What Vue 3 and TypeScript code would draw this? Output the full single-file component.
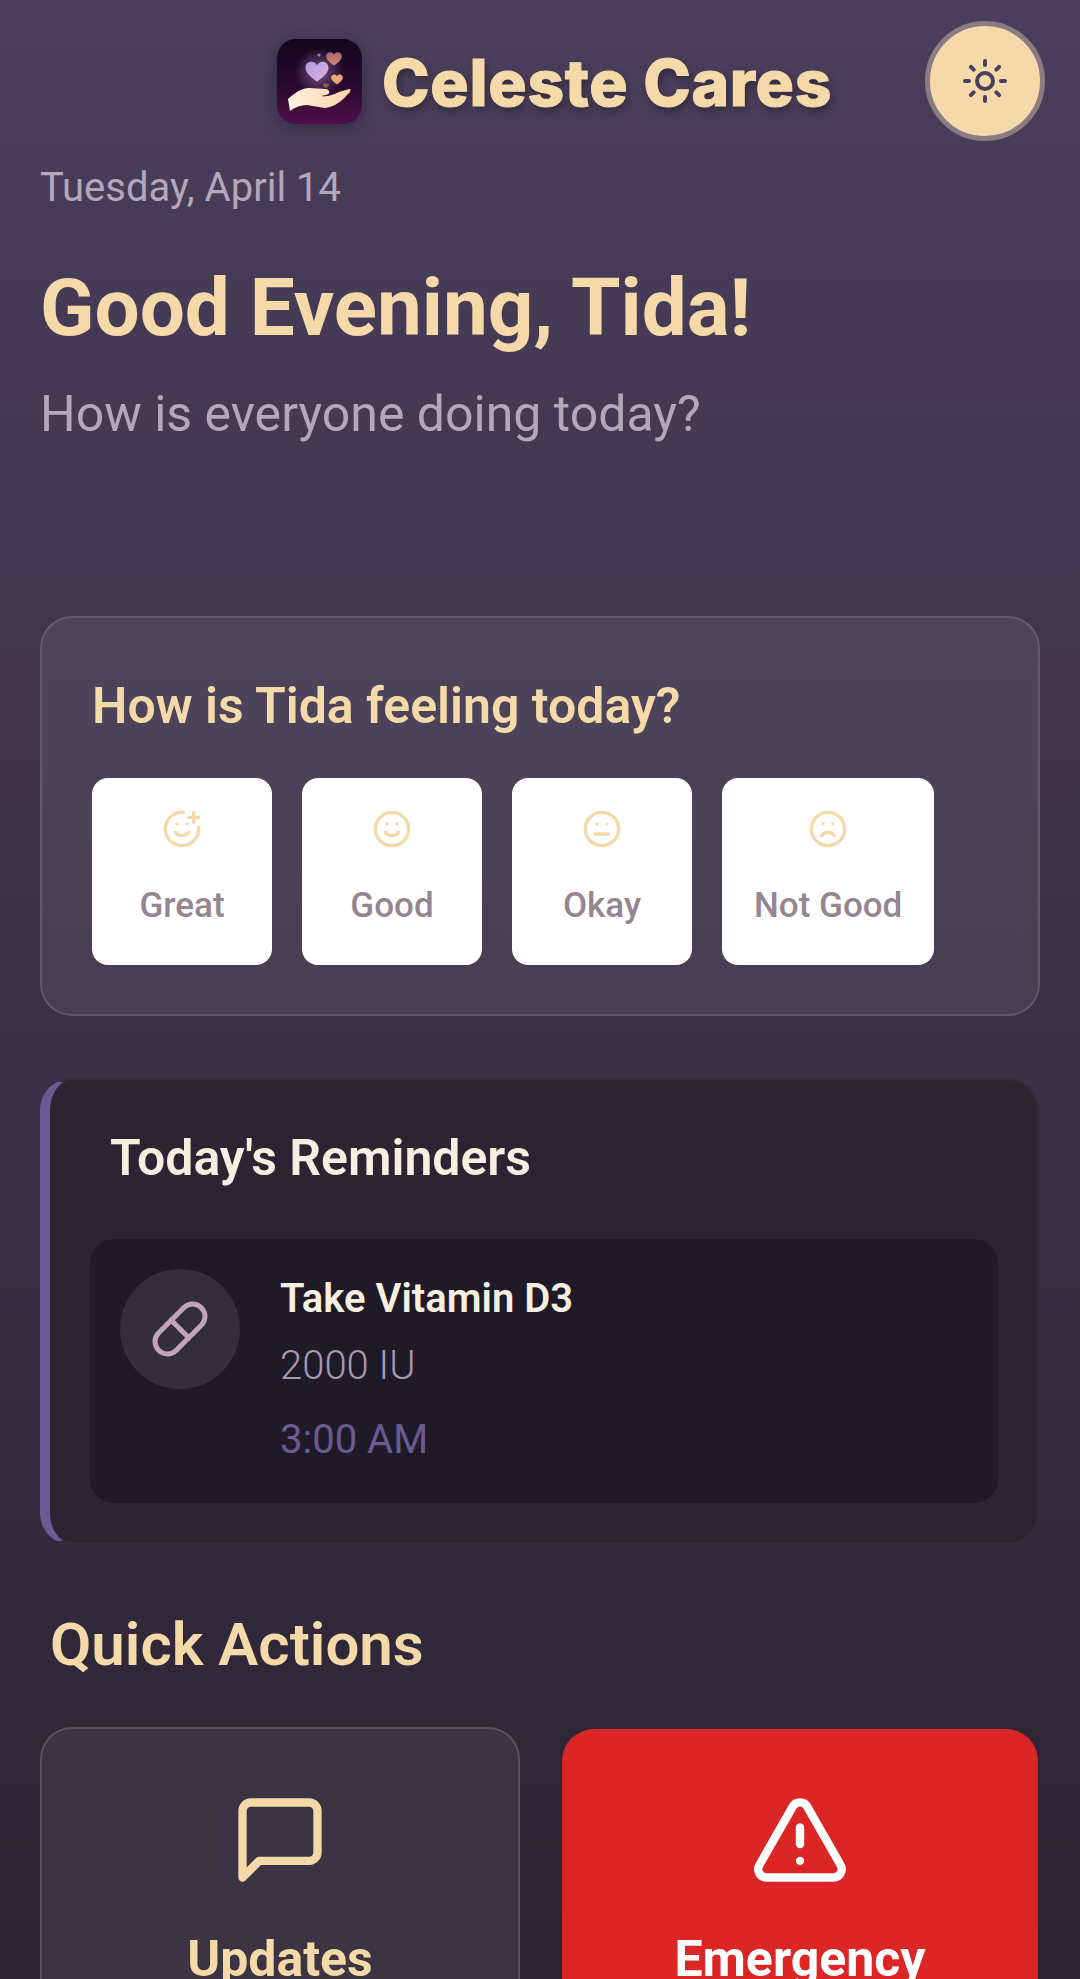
<script setup lang="ts">
interface Mood {
  label: string;
  paths: string[];
}

const eyes = ["M9 9h.01", "M15 9h.01"];
const face = "M2 12a10 10 0 1 0 20 0a10 10 0 1 0 -20 0";

const moods: Mood[] = [
  {
    label: "Great",
    paths: ["M22 11v1a10 10 0 1 1-9-10", "M8 14s1.5 2 4 2 4-2 4-2", "M16 5h6", "M19 2v6", ...eyes],
  },
  { label: "Good", paths: [face, "M8 14s1.5 2 4 2 4-2 4-2", ...eyes] },
  { label: "Okay", paths: [face, "M8 15h8", ...eyes] },
  { label: "Not Good", paths: [face, "M16 16s-1.5-2-4-2-4 2-4 2", ...eyes] },
];

const heart = "M0-3C-2-8-10-7-10-1C-10 4-4 8 0 11C4 8 10 4 10-1C10-7 2-8 0-3Z";
</script>

<template>
  <div class="page">
    <header class="header">
      <div class="brand">
        <svg class="logo" viewBox="0 0 85 85">
          <defs>
            <linearGradient id="tile" x1="0" y1="0" x2="0" y2="1">
              <stop offset="0" stop-color="#14051c" />
              <stop offset="0.55" stop-color="#2a0a30" />
              <stop offset="1" stop-color="#4d0f48" />
            </linearGradient>
            <radialGradient id="glow">
              <stop offset="0" stop-color="#b48fd0" stop-opacity="0.55" />
              <stop offset="1" stop-color="#b48fd0" stop-opacity="0" />
            </radialGradient>
            <linearGradient id="lilac" x1="0" y1="0" x2="1" y2="1">
              <stop offset="0" stop-color="#b59ae0" />
              <stop offset="1" stop-color="#d8b6dc" />
            </linearGradient>
            <linearGradient id="peach" x1="0" y1="0" x2="0" y2="1">
              <stop offset="0" stop-color="#a8686c" />
              <stop offset="1" stop-color="#d08a70" />
            </linearGradient>
            <linearGradient id="handFill" x1="0" y1="0" x2="1" y2="0">
              <stop offset="0" stop-color="#fff4de" />
              <stop offset="1" stop-color="#fbd3aa" />
            </linearGradient>
            <filter id="soft"><feGaussianBlur stdDeviation="0.5" /></filter>
          </defs>
          <rect width="85" height="85" rx="19" fill="url(#tile)" />
          <circle cx="42" cy="33" r="24" fill="url(#glow)" />
          <g filter="url(#soft)">
            <circle cx="42" cy="16" r="1.6" fill="#a77f9f" />
            <path :d="heart" fill="url(#peach)" transform="translate(57 18) scale(0.78)" />
            <path :d="heart" fill="url(#lilac)" transform="translate(40 30) scale(1.15)" />
            <path :d="heart" fill="#e8a878" transform="translate(60 39) scale(0.58)" />
            <path :d="heart" fill="#8f5a50" transform="translate(49 46) scale(0.3)" />
          </g>
          <path
            d="M11 60C18 54 24 49 32 49L48 50C53 50 54 55 49 56L44 57C50 58 56 56 62 53L72 50C74 50 74 52 72 54C66 61 58 68 48 69L30 66C24 66 18 68 13 72Z"
            fill="url(#handFill)"
          />
        </svg>
        <span class="title">Celeste Cares</span>
      </div>
      <button class="theme-button">
        <svg class="sun" viewBox="0 0 24 24">
          <circle cx="12" cy="12" r="4" />
          <path d="M12 2v2M12 20v2M4.93 4.93l1.41 1.41M17.66 17.66l1.41 1.41M2 12h2M20 12h2M6.34 17.66l-1.41 1.41M19.07 4.93l-1.41 1.41" />
        </svg>
      </button>
    </header>

    <p class="date">Tuesday, April 14</p>
    <h1 class="greeting">Good Evening, Tida!</h1>
    <p class="subtitle">How is everyone doing today?</p>

    <section class="mood-card">
      <h2 class="mood-title">How is Tida feeling today?</h2>
      <div class="mood-row">
        <button v-for="mood in moods" :key="mood.label" class="mood-button">
          <svg class="mood-icon" viewBox="0 0 24 24">
            <path v-for="d in mood.paths" :key="d" :d="d" />
          </svg>
          <span>{{ mood.label }}</span>
        </button>
      </div>
    </section>

    <section class="reminders">
      <h2 class="reminders-title">Today's Reminders</h2>
      <div class="reminder">
        <div class="pill-circle">
          <svg class="pill" viewBox="0 0 24 24">
            <path d="m10.5 20.5 10-10a4.95 4.95 0 1 0-7-7l-10 10a4.95 4.95 0 1 0 7 7Z" />
            <path d="m8.5 8.5 7 7" />
          </svg>
        </div>
        <div class="reminder-text">
          <div class="reminder-name">Take Vitamin D3</div>
          <div class="reminder-dose">2000 IU</div>
          <div class="reminder-time">3:00 AM</div>
        </div>
      </div>
    </section>

    <h2 class="quick-title">Quick Actions</h2>
    <div class="actions">
      <div class="action updates">
        <svg class="action-icon" viewBox="0 0 24 24">
          <path d="M21 15a2 2 0 0 1-2 2H7l-4 4V5a2 2 0 0 1 2-2h14a2 2 0 0 1 2 2z" />
        </svg>
        <span>Updates</span>
      </div>
      <div class="action emergency">
        <svg class="action-icon" viewBox="0 0 24 24">
          <path d="m21.73 18-8-14a2 2 0 0 0-3.48 0l-8 14A2 2 0 0 0 4 21h16a2 2 0 0 0 1.73-3" />
          <path d="M12 9v4" />
          <path d="M12 17h.01" />
        </svg>
        <span>Emergency</span>
      </div>
    </div>
  </div>
</template>

<style>
html,
body {
  margin: 0;
  background: #2a2433;
}
</style>

<style scoped>
svg {
  display: block;
  fill: none;
  stroke: currentColor;
  stroke-width: 2;
  stroke-linecap: round;
  stroke-linejoin: round;
}

.page {
  box-sizing: border-box;
  width: 1080px;
  height: 1979px;
  overflow: hidden;
  padding: 21px 40px 0;
  background: linear-gradient(180deg, #4a3f5c 0%, #2a2433 100%);
  font-family: Roboto, sans-serif;
}

.header {
  display: flex;
  align-items: center;
  justify-content: space-between;
  margin-right: -5px;
}

.brand {
  display: flex;
  align-items: center;
  gap: 20px;
  margin-left: 237px;
}

.logo {
  width: 85px;
  height: 85px;
  stroke: none;
  filter: drop-shadow(0 4px 8px rgba(0, 0, 0, 0.3));
}

.title {
  margin-top: 3px;
  font-family: Inter, sans-serif;
  font-weight: 800;
  font-size: 64px;
  letter-spacing: 0.7px;
  color: #f5d9a8;
  -webkit-text-stroke: 1px #f5d9a8;
  text-shadow: 2px 4px 8px rgba(0, 0, 0, 0.35);
}

.theme-button {
  box-sizing: border-box;
  width: 120px;
  height: 120px;
  border-radius: 50%;
  border: 5px solid #8b7b83;
  background: #f5d9a8;
  color: #4a3f5c;
  display: flex;
  align-items: center;
  justify-content: center;
  padding: 0;
}

.sun {
  width: 48px;
  height: 48px;
}

.date {
  margin: 25px 0 0;
  font-size: 40px;
  line-height: 44px;
  color: #b5a6bb;
}

.greeting {
  margin: 50px 0 0;
  font-size: 80px;
  line-height: 96px;
  font-weight: 700;
  color: #f5d9a8;
}

.subtitle {
  margin: 30px 0 0;
  font-size: 50px;
  line-height: 56px;
  color: #b5a6bb;
}

.mood-card {
  box-sizing: border-box;
  height: 400px;
  margin-top: 174px;
  padding: 60px 50px 0;
  border: 2px solid rgba(255, 255, 255, 0.12);
  border-radius: 32px;
  background: rgba(255, 255, 255, 0.07);
}

.mood-title {
  margin: 0;
  font-size: 50px;
  line-height: 56px;
  font-weight: 600;
  color: #f5d9a8;
}

.mood-row {
  display: flex;
  gap: 30px;
  margin-top: 44px;
}

.mood-button {
  box-sizing: border-box;
  min-width: 180px;
  height: 187px;
  padding: 0 32px;
  border: none;
  border-radius: 16px;
  background: #fff;
  display: flex;
  flex-direction: column;
  align-items: center;
  font-family: inherit;
  font-size: 35px;
  font-weight: 500;
  color: #958590;
}

.mood-icon {
  width: 40px;
  height: 40px;
  margin-top: 31px;
  margin-bottom: 36px;
  color: #f5d9a8;
}

.reminders {
  box-sizing: border-box;
  width: 999px;
  height: 467px;
  margin-top: 62px;
  padding: 0 39px 0 40px;
  border: 2px solid rgba(255, 255, 255, 0.04);
  border-left: 10px solid #6b5b95;
  border-radius: 32px;
  background: #2a2433;
}

.reminders-title {
  margin: 50px 0 0 20px;
  font-size: 50px;
  line-height: 56px;
  font-weight: 600;
  color: #f5efe0;
}

.reminder {
  display: flex;
  gap: 40px;
  height: 264px;
  box-sizing: border-box;
  margin-top: 53px;
  padding: 30px;
  border-radius: 24px;
  background: #1f1a28;
}

.pill-circle {
  flex: none;
  width: 120px;
  height: 120px;
  border-radius: 50%;
  background: #342d3a;
  display: flex;
  align-items: center;
  justify-content: center;
  color: #c4a3bf;
}

.pill {
  width: 60px;
  height: 60px;
}

.reminder-name {
  margin-top: 6px;
  font-size: 40px;
  line-height: 48px;
  font-weight: 600;
  color: #f5efe0;
}

.reminder-dose {
  margin-top: 19px;
  font-size: 40px;
  line-height: 48px;
  font-weight: 300;
  color: #a898b0;
}

.reminder-time {
  margin-top: 26px;
  font-size: 40px;
  line-height: 48px;
  color: #6b5b95;
}

.quick-title {
  margin: 66px 0 0 10px;
  font-size: 60px;
  line-height: 68px;
  font-weight: 600;
  color: #f5d9a8;
}

.actions {
  display: grid;
  grid-template-columns: 480px 476px;
  gap: 42px;
  margin-top: 48px;
}

.action {
  box-sizing: border-box;
  height: 400px;
  border-radius: 32px;
  display: flex;
  flex-direction: column;
  align-items: center;
  font-size: 50px;
  font-weight: 700;
}

.updates {
  padding-top: 61px;
  border: 2px solid rgba(255, 255, 255, 0.14);
  background: #3b3442;
  color: #f5d9a8;
}

.emergency {
  margin-top: 2px;
  padding-top: 61px;
  background: #dc2626;
  color: #fff;
}

.action-icon {
  width: 100px;
  height: 100px;
  margin-bottom: 40px;
}
</style>
